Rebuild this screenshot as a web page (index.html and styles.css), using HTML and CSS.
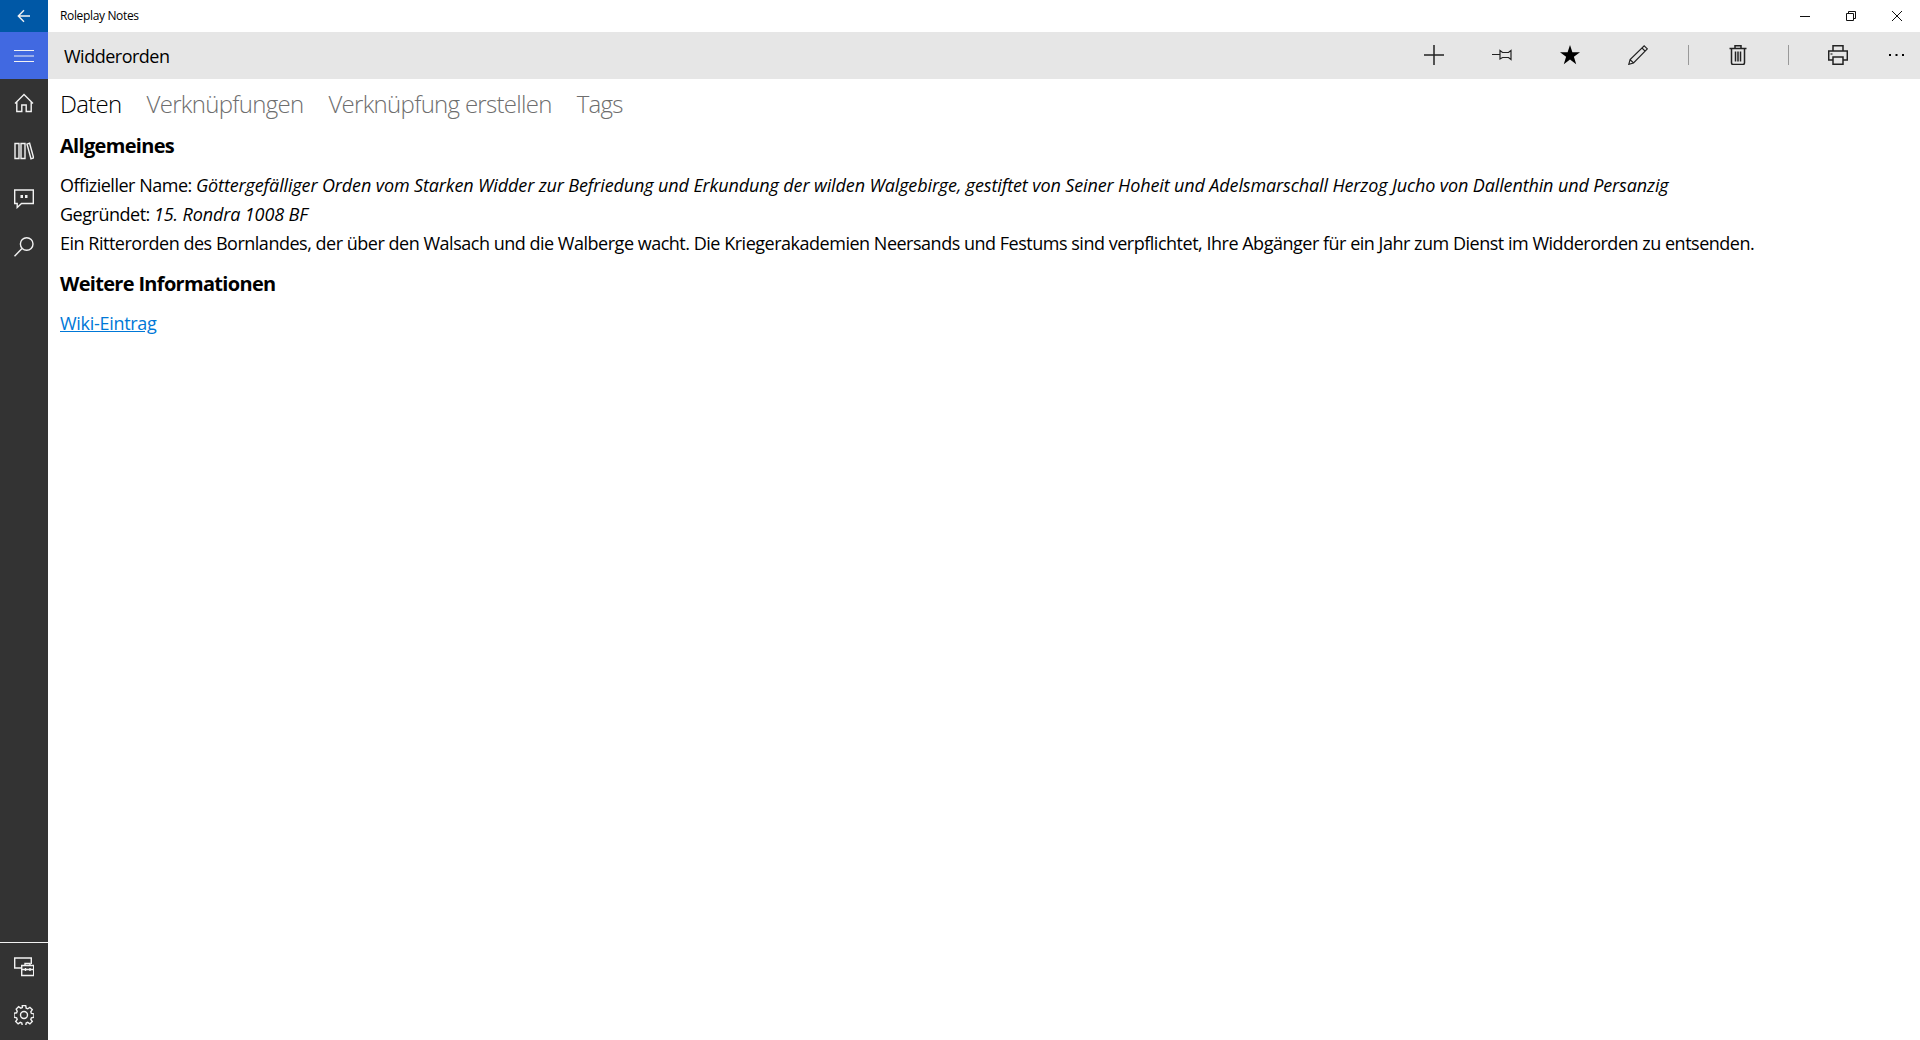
FILE: index.html
```html
<!DOCTYPE html>
<html lang="de">
<head>
<meta charset="utf-8">
<title>Roleplay Notes</title>
<link rel="stylesheet" href="styles.css">
</head>
<body>
<div class="app">
  <aside class="rail">
    <button class="rail-btn back" aria-label="Zurück"><svg width="16" height="16" viewBox="0 0 16 16"><path d="M14 8H2.500M8 2.300 2.300 8 8 13.700" class="ln"/></svg></button>
    <button class="rail-btn burger" aria-label="Menü"><svg width="20" height="14" viewBox="0 0 20 14"><path d="M0 1.500h20M0 7h20M0 12.500h20" class="ln thin"/></svg></button>
    <nav class="rail-top">
      <button class="rail-btn nav"><svg width="20" height="20" viewBox="0 0 20 20"><path d="M1 10.500 10 1.500l9 9M2.800 9v9.500h5v-6.500h4.400v6.500h5V9" class="ln"/></svg></button>
      <button class="rail-btn nav"><svg width="20" height="20" viewBox="0 0 20 20"><path d="M1 2.500h4v15H1zM7 2.500h4v15H7zM13 3.200l2.600-1 4 14.600-2.600 1z" class="ln"/></svg></button>
      <button class="rail-btn nav"><svg width="20" height="20" viewBox="0 0 20 20"><path d="M.7 1h18.600v13.500H7.500l-4.300 4v-4H.7z" class="ln"/><path d="M6.500 6h2.500v3H6.500zM11 6h2.500v3H11z" class="fill"/></svg></button>
      <button class="rail-btn nav"><svg width="20" height="20" viewBox="0 0 20 20"><circle cx="12.700" cy="7" r="6.300" class="ln"/><path d="M8 11.500.5 19.300" class="ln"/></svg></button>
    </nav>
    <div class="rail-bottom">
      <button class="rail-btn nav"><svg width="20" height="20" viewBox="0 0 20 20"><path d="M7 11H.7V1h16.600v6" class="ln"/><path d="M7.700 8.500h12v10h-12zM7.700 12.500h12M11 8.500v-2h5v2M11.500 11v3M16 11v3" class="ln"/></svg></button>
      <button class="rail-btn nav"><svg width="20" height="20" viewBox="0 0 20 20"><path d="M8.300.6h3.400l.5 2.600 1.500.6 2.200-1.500 2.400 2.400-1.500 2.200.6 1.500 2.600.5v3.400l-2.600.5-.6 1.500 1.500 2.200-2.400 2.400-2.200-1.500-1.500.6-.5 2.600H8.300l-.5-2.600-1.500-.6-2.200 1.500-2.400-2.400 1.500-2.200-.6-1.500-2.600-.5V8.300l2.600-.5.6-1.500L2.200 4.100l2.400-2.400 2.200 1.500 1.500-.6z" class="ln"/><circle cx="10" cy="10" r="3.500" class="ln"/></svg></button>
    </div>
  </aside>
  <div class="main">
    <div class="titlebar">
      <span class="app-name">Roleplay Notes</span>
      <div class="win-btns">
        <span class="win-btn"><svg width="10" height="10" viewBox="0 0 10 10"><path d="M0 5.500h10" class="dk"/></svg></span>
        <span class="win-btn"><svg width="10" height="10" viewBox="0 0 10 10"><path d="M.5 2.500h7v7h-7zM2.500 2.500v-2h7v7h-2" class="dk"/></svg></span>
        <span class="win-btn"><svg width="10" height="10" viewBox="0 0 10 10"><path d="M0 0l10 10M10 0 0 10" class="dk"/></svg></span>
      </div>
    </div>
    <header class="cmdbar">
      <h1 class="page-title">Widderorden</h1>
      <div class="cmds">
        <button class="cmd"><svg width="20" height="20" viewBox="0 0 20 20"><path d="M0 10h20M10 0v20" class="tb"/></svg></button>
        <button class="cmd"><svg width="20" height="20" viewBox="0 0 20 20"><path d="M0 9.500h8M8 5.500l2.500 2h6l2.500-2v9l-2.500-2h-6L8 14z" class="tb thin"/></svg></button>
        <button class="cmd"><svg width="20" height="20" viewBox="0 0 20 20"><path d="M10 0l2.400 7.300H20l-6.100 4.500 2.300 7.400-6.200-4.600-6.200 4.600 2.300-7.400L0 7.300h7.600z" class="blk"/></svg></button>
        <button class="cmd"><svg width="20" height="20" viewBox="0 0 20 20"><path d="M16.200.8 19.300 3.900 5.500 18 .8 19.300 2.100 14.600zM2.100 14.600l3.400 3.400M14 3l3.100 3.100" class="tb thin"/></svg></button>
        <span class="sep"></span>
        <button class="cmd"><svg width="20" height="20" viewBox="0 0 20 20"><path d="M1.500 3.500h17M3.500 3.500v14.300q0 1.700 1.700 1.700h9.600q1.700 0 1.700-1.700V3.500M7 3.500V.7h6v2.800" class="tb"/><path d="M7.500 6.500v10M10 6.500v10M12.500 6.500v10" class="tb"/></svg></button>
        <span class="sep"></span>
        <button class="cmd"><svg width="20" height="20" viewBox="0 0 20 20"><path d="M5 6V.7h10V6M5 15H.7V6h18.600v9H15M5 12h10v7.300H5z" class="tb"/><path d="M2.500 8.500h2v1h-2z" class="blk"/></svg></button>
        <button class="cmd more"><svg width="16" height="4" viewBox="0 0 16 4"><path d="M1 1h2v2H1zM7.500 1h2v2h-2zM14 1h2v2h-2z" class="blk"/></svg></button>
      </div>
    </header>
    <main class="content">
      <div class="tabs">
        <span class="tab active">Daten</span>
        <span class="tab">Verknüpfungen</span>
        <span class="tab">Verknüpfung erstellen</span>
        <span class="tab">Tags</span>
      </div>
      <h2 class="head">Allgemeines</h2>
      <p class="line">Offizieller Name: <em class="val">Göttergefälliger Orden vom Starken Widder zur Befriedung und Erkundung der wilden Walgebirge, gestiftet von Seiner Hoheit und Adelsmarschall Herzog Jucho von Dallenthin und Persanzig</em></p>
      <p class="line">Gegründet: <em class="val">15. Rondra 1008 BF</em></p>
      <p class="line">Ein Ritterorden des Bornlandes, der über den Walsach und die Walberge wacht. Die Kriegerakademien Neersands und Festums sind verpflichtet, Ihre Abgänger für ein Jahr zum Dienst im Widderorden zu entsenden.</p>
      <h2 class="head second">Weitere Informationen</h2>
      <p class="line"><a class="link" href="#">Wiki-Eintrag</a></p>
    </main>
  </div>
</div>
</body>
</html>
```
FILE: styles.css
```css
* { box-sizing: border-box; }
html, body { margin: 0; height: 100%; }
body { font-family: "Open Sans", "Noto Sans", "Liberation Sans", sans-serif; background: #fff; color: #000; overflow: hidden; }
button { border: 0; background: none; padding: 0; margin: 0; display: flex; align-items: center; justify-content: center; }
svg { display: block; }
.ln { fill: none; stroke: #f2f2f2; stroke-width: 1.4; }
.ln.thin { stroke-width: 1; }
.fill { fill: #f2f2f2; }
.dk { fill: none; stroke: #111; stroke-width: 1; }
.tb { fill: none; stroke: #222; stroke-width: 1.5; }
.tb.thin { stroke-width: 1.2; }
.blk { fill: #000; }
.app { display: flex; height: 1040px; }
.rail { width: 48px; flex: none; background: #333; display: flex; flex-direction: column; }
.rail-btn { width: 48px; flex: none; }
.back { height: 32px; background: #0058a6; }
.burger { height: 47px; background: #4169e1; }
.nav { height: 48px; }
.rail-top { flex: 1; }
.rail-bottom { border-top: 1px solid #f2f2f2; margin-bottom: 1px; }
.main { flex: 1; min-width: 0; display: flex; flex-direction: column; }
.titlebar { height: 32px; flex: none; display: flex; align-items: center; justify-content: space-between; padding-left: 12px; }
.app-name { font-size: 12px; letter-spacing: -.35px; padding-bottom: 1px; }
.win-btns { display: flex; }
.win-btn { width: 46px; height: 32px; display: flex; align-items: center; justify-content: center; }
.cmdbar { height: 47px; flex: none; background: #e6e6e6; display: flex; align-items: center; justify-content: space-between; padding-left: 16px; }
.page-title { margin: 0; font-size: 18px; font-weight: 400; letter-spacing: -.5px; }
.cmds { display: flex; align-items: center; height: 100%; padding-bottom: 1px; }
.cmd { width: 68px; height: 100%; }
.more { width: 48px; }
.sep { width: 32px; height: 20px; display: flex; justify-content: center; }
.sep::before { content: ""; width: 1px; background: #999; }
.content { flex: 1; padding: 0 12px; }
.tabs { display: flex; gap: 25px; height: 53px; padding-top: 9px; }
.tab { font-size: 24px; font-weight: 300; color: #6e6e6e; letter-spacing: -.7px; line-height: 32px; }
.tab.active { color: #000; }
.head { margin: 0; font-size: 20px; font-weight: 700; letter-spacing: -.68px; line-height: 28px; padding-bottom: 11px; }
.second { padding-top: 12px; }
.line { margin: 0; font-size: 18px; line-height: 29px; letter-spacing: -.485px; white-space: nowrap; }
.val { letter-spacing: -.125px; }
.link { color: #0078d7; text-decoration: underline; letter-spacing: -.3px; }
```
